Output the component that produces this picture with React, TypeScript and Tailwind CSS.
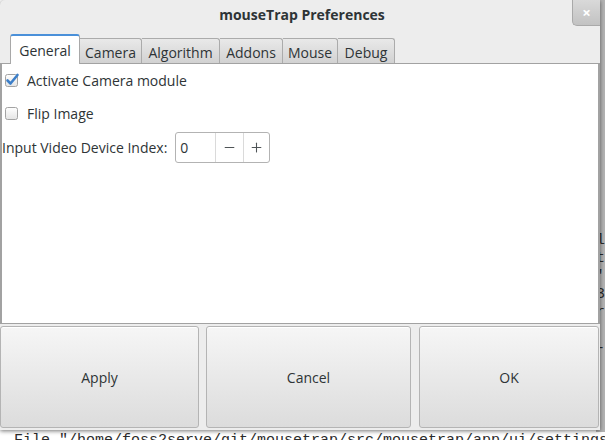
import { Minus, Plus } from 'lucide-react';

const tabs = [
  { name: 'General', width: 'w-[70px]', active: true },
  { name: 'Camera', width: 'w-[62px]', active: false },
  { name: 'Algorithm', width: 'w-[78px]', active: false },
  { name: 'Addons', width: 'w-[63px]', active: false },
  { name: 'Mouse', width: 'w-[55px]', active: false },
  { name: 'Debug', width: 'w-[57px]', active: false },
];

const termChars = ['l', 't', "'", '3', 'r', '', '-'];

function CheckBox({ checked }: { checked: boolean }) {
  return (
    <svg width="15" height="15" viewBox="0 0 15 15" className="shrink-0 overflow-visible">
      <defs>
        <linearGradient id="cbg" x1="0" y1="0" x2="0" y2="1">
          <stop offset="0" stopColor="#ffffff" />
          <stop offset="1" stopColor="#e4e4e4" />
        </linearGradient>
      </defs>
      <rect x="0.5" y="1.5" width="12" height="12" rx="2" fill="url(#cbg)" stroke="#a3a3a3" />
      {checked && (
        <path
          d="M2.5 7.5 L5.5 10.5 L12.5 2"
          fill="none"
          stroke="#3d7fc8"
          strokeWidth="2.6"
          strokeLinecap="round"
          strokeLinejoin="round"
        />
      )}
    </svg>
  );
}

function DialogButton({ label, width }: { label: string; width: string }) {
  return (
    <button
      type="button"
      className={`${width} h-full rounded-[3px] border border-[#b4b4b4] bg-gradient-to-b from-[#f6f6f6] to-[#dcdcdc] text-[14px] text-[#2e3436] shadow-[inset_0_1px_0_#ffffff]`}
    >
      {label}
    </button>
  );
}

export default function App() {
  return (
    <div className="relative w-[605px] h-[440px] overflow-hidden bg-white">
      {/* Terminal behind the dialog */}
      <div className="flex h-full flex-col font-['Liberation_Mono',monospace] text-[15px] leading-[18px] text-[#2a2a2a]">
        <div className="flex h-[432px] shrink-0">
          <div className="w-[600px]" />
          <div className="flex flex-1 flex-col bg-[#b3b3b3] pt-[232px]">
            {termChars.map((c, i) => (
              <div key={i} className="h-[18px] whitespace-pre">
                {c || ' '}
              </div>
            ))}
          </div>
        </div>
        <div className="whitespace-pre pl-[14px]">File "/home/foss2serve/git/mousetrap/src/mousetrap/app/ui/settings</div>
      </div>

      {/* Preferences dialog */}
      <div className="absolute left-0 top-0 flex h-[430px] w-[600px] flex-col rounded-tl-[5px] bg-[#ededed] font-['Open_Sans',sans-serif] text-[#2e3436] shadow-[0_1px_4px_rgba(0,0,0,0.55)]">
        {/* Title bar */}
        <div className="flex h-[34px] shrink-0">
          <div className="flex-1 pl-[32px] pt-[5px] text-center text-[14px] font-bold leading-[20px]">
            mouseTrap Preferences
          </div>
          <div className="flex h-[26px] w-[28px] items-center justify-center rounded-bl-[5px] border-b border-l border-[#a9a9a9] bg-gradient-to-b from-[#d9d9d9] to-[#c2c2c2] text-[15px] font-bold leading-none text-white">
            ×
          </div>
        </div>

        {/* Tabs */}
        <div className="flex h-[29px] shrink-0 items-end pl-[10px]">
          {tabs.map((t) =>
            t.active ? (
              <div
                key={t.name}
                className={`${t.width} relative z-10 -mb-px flex h-[30px] items-center justify-center rounded-t-[3px] border-x border-t-2 border-x-[#a8a8a8] border-t-[#4a90d9] bg-white pt-[1px] text-[14px]`}
              >
                {t.name}
              </div>
            ) : (
              <div
                key={t.name}
                className={`${t.width} flex h-[25px] items-center justify-center rounded-tr-[3px] border-r border-t border-[#ababab] bg-gradient-to-b from-[#e9e9e9] to-[#d2d2d2] pt-[2px] text-[14px]`}
              >
                {t.name}
              </div>
            )
          )}
        </div>

        {/* Page */}
        <div className="flex flex-1 flex-col border-x-2 border-y border-[#a2a2a2] bg-white text-[14px]">
          <div className="mt-[6px] flex h-[20px] items-center gap-[7px] pl-[3px]">
            <CheckBox checked />
            <span>Activate Camera module</span>
          </div>
          <div className="mt-[13px] flex h-[20px] items-center gap-[7px] pl-[3px]">
            <CheckBox checked={false} />
            <span>Flip Image</span>
          </div>
          <div className="mt-[9px] flex h-[31px] items-center gap-[8px]">
            <span>Input Video Device Index:</span>
            <div className="flex h-full w-[95px] overflow-hidden rounded-[3px] border border-[#b3b3b3] bg-white">
              <div className="flex w-[39px] items-center pl-[4px]">0</div>
              <div className="flex w-[28px] items-center justify-center border-l border-[#dadada] text-[#4f5456]">
                <Minus size={15} strokeWidth={1.7} />
              </div>
              <div className="flex flex-1 items-center justify-center border-l border-[#dadada] text-[#4f5456]">
                <Plus size={15} strokeWidth={1.7} />
              </div>
            </div>
          </div>
        </div>

        {/* Action area */}
        <div className="mt-[2px] mb-[2px] flex h-[102px] shrink-0">
          <DialogButton label="Apply" width="w-[199px]" />
          <div className="w-[7px]" />
          <DialogButton label="Cancel" width="w-[205px]" />
          <div className="w-[8px]" />
          <DialogButton label="OK" width="w-[180px]" />
        </div>
      </div>
    </div>
  );
}
